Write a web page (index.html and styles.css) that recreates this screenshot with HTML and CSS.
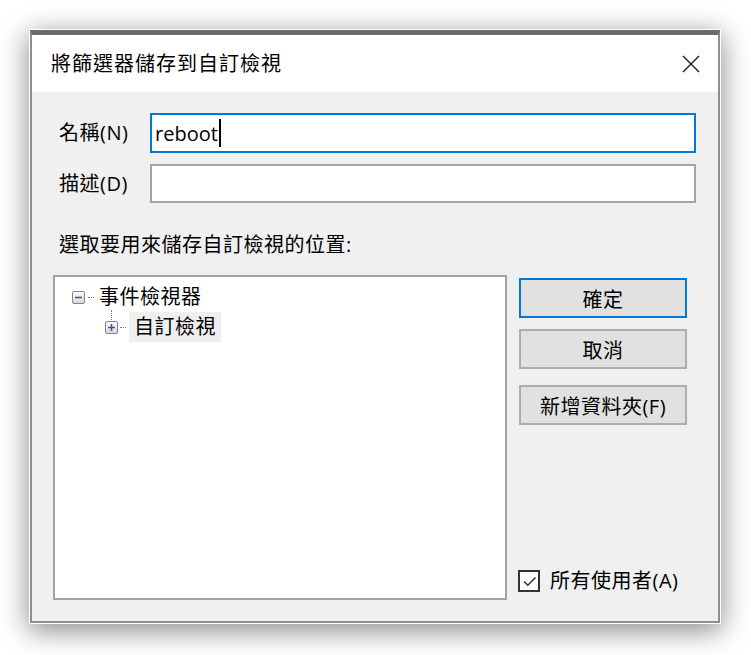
FILE: index.html
```html
<!DOCTYPE html>
<html lang="zh-Hant">
<head>
<meta charset="utf-8">
<title>將篩選器儲存到自訂檢視</title>
<link rel="stylesheet" href="styles.css">
</head>
<body>
<div class="dialog">
  <div class="titlebar">
    <span class="title">將篩選器儲存到自訂檢視</span>
    <svg class="close" width="18" height="18" viewBox="0 0 18 18"><path d="M1 1L17 17M17 1L1 17" stroke="#1a1a1a" stroke-width="1.4" fill="none"/></svg>
  </div>
  <div class="content">
    <div class="field">
      <span class="label">名稱(N)</span>
      <div class="input focus"><span class="value">reboot</span><span class="caret"></span></div>
    </div>
    <div class="field f2">
      <span class="label">描述(D)</span>
      <div class="input"></div>
    </div>
    <div class="section-label">選取要用來儲存自訂檢視的位置:</div>
    <div class="main">
      <div class="tree">
        <div class="node n1">
          <svg class="exp" width="13" height="13" viewBox="0 0 13 13"><defs><linearGradient id="g1" x1="0" y1="0" x2="0" y2="1"><stop offset="0" stop-color="#ffffff"/><stop offset="1" stop-color="#d6d6d6"/></linearGradient></defs><rect x="0.5" y="0.5" width="12" height="12" rx="1.5" fill="url(#g1)" stroke="#848484"/><path d="M3 6.5H10" stroke="#3b5b98" stroke-width="1.6"/></svg>
          <span class="dots"></span>
          <span class="txt">事件檢視器</span>
        </div>
        <div class="node n2">
          <span class="vline"></span>
          <svg class="exp" width="13" height="13" viewBox="0 0 13 13"><defs><linearGradient id="g2" x1="0" y1="0" x2="0" y2="1"><stop offset="0" stop-color="#ffffff"/><stop offset="1" stop-color="#d6d6d6"/></linearGradient></defs><rect x="0.5" y="0.5" width="12" height="12" rx="1.5" fill="url(#g2)" stroke="#848484"/><path d="M3 6.5H10M6.5 3V10" stroke="#3b5b98" stroke-width="1.6"/></svg>
          <span class="dots short"></span>
          <span class="txt sel">自訂檢視</span>
        </div>
      </div>
      <div class="side">
        <button class="btn default">確定</button>
        <button class="btn">取消</button>
        <button class="btn third">新增資料夾(F)</button>
        <div class="check">
          <span class="box"><svg width="17" height="17" viewBox="0 0 17 17"><path d="M3 8.5L6.8 12.3L14.5 4.5" stroke="#333" stroke-width="1.5" fill="none"/></svg></span>
          <span>所有使用者(A)</span>
        </div>
      </div>
    </div>
  </div>
</div>
</body>
</html>
```

FILE: styles.css
```css
* { box-sizing: border-box; }
html, body { margin: 0; background: #ffffff; }
body {
  min-height: 655px;
  padding: 30px 0 0 30px;
  font-family: "Open Sans", "Noto Sans CJK TC", sans-serif;
  font-size: 20px;
  color: #000;
  letter-spacing: 0.5px;
}
.dialog {
  width: 690px;
  height: 593px;
  border: 2px solid #8e8e8e;
  border-top: 5px solid #6b6b6b;
  background: #f0f0f0;
  box-shadow: 0 0 0 1px #ffffff, 0 6px 26px 2px rgba(0,0,0,0.45);
  display: flex;
  flex-direction: column;
}
.titlebar {
  height: 57px;
  background: #ffffff;
  display: flex;
  align-items: center;
  justify-content: space-between;
  padding: 0 18px 0 19px;
}
.title { letter-spacing: 1px; line-height: 24px; }
.close { display: block; }
.content {
  flex: 1;
  display: flex;
  flex-direction: column;
  padding: 21px 22px 21px 21px;
}
.field { display: flex; align-items: center; height: 40px; }
.field .label { width: 97px; padding-left: 6px; line-height: 24px; }
.input {
  flex: 1;
  height: 40px;
  background: #fff;
  border: 2px solid #a5a5a5;
  display: flex;
  align-items: center;
  padding-left: 3px;
}
.input.focus { border-color: #0078d7; }
.value { letter-spacing: 0; }
.caret { width: 2px; height: 28px; background: #000; margin-left: 1px; }
.f2 { margin-top: 11px; height: 39px; }
.f2 .input { height: 39px; }
.section-label { margin-top: 30px; padding-left: 6px; line-height: 24px; }
.main {
  margin-top: 18px;
  flex: 1;
  display: flex;
  gap: 12px;
}
.tree {
  width: 454px;
  background: #fff;
  border: 2px solid #a0a3a8;
  padding-top: 5px;
}
.node { display: flex; align-items: center; height: 30px; position: relative; }
.n1 { padding-left: 17px; }
.n2 { padding-left: 50px; }
.exp { display: block; flex: none; }
.dots { width: 6px; border-top: 1px dotted #7a7a7a; margin-left: 3px; }
.dots.short { margin-left: 2px; }
.n1 .txt { margin-left: 5px; }
.txt { line-height: 30px; }
.sel { margin-left: 3px; padding: 0 5px; background: #efefef; }
.vline {
  position: absolute;
  left: 56px;
  top: -2px;
  height: 10px;
  border-left: 1px dotted #7a7a7a;
}
.side {
  width: 168px;
  display: flex;
  flex-direction: column;
  padding-top: 3px;
}
.btn {
  height: 40px;
  margin: 0;
  padding: 0;
  background: #e1e1e1;
  border: 2px solid #adadad;
  font: inherit;
  letter-spacing: inherit;
  color: #000;
}
.btn + .btn { margin-top: 11px; }
.btn.third { margin-top: 16px; }
.btn.default { border-color: #0078d7; }
.check {
  margin-top: auto;
  margin-bottom: 7px;
  margin-left: -1px;
  display: flex;
  align-items: center;
  gap: 10px;
  line-height: 24px;
}
.box {
  width: 22px;
  height: 22px;
  border: 2px solid #333;
  background: #fff;
  display: flex;
  align-items: center;
  justify-content: center;
}
.box svg { display: block; }
```
